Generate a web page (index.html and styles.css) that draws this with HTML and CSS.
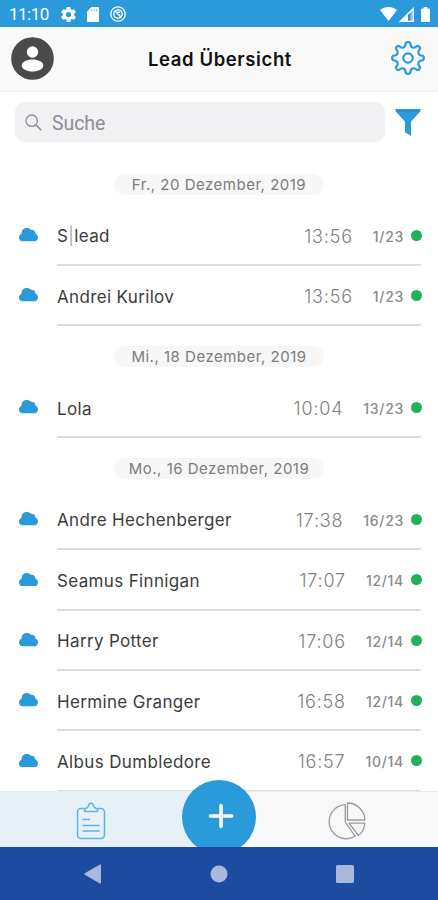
FILE: index.html
```html
<!DOCTYPE html>
<html lang="de">

<head>
    <meta charset="UTF-8">
    <meta name="viewport" content="width=device-width, initial-scale=1.0">
    <title>Lead Übersicht</title>
    <link rel="stylesheet" href="styles.css">
</head>

<body>
    <!-- shared icons -->
    <svg class="sprite" width="0" height="0">
        <symbol id="cloud" viewBox="0 0 20 14" preserveAspectRatio="none">
            <path d="M4.200 14A4.100 4.100 0 0 1 0 9.900C0 8 1.100 6.600 2.700 6 2.600 2.500 4.700 0 8 0c2 0 3.500.7 4.600 1.800 2.700-.4 4.600 1.200 4.600 3.800 1.700.7 2.800 2.300 2.800 4.300 0 2.400-1.800 4.100-4.200 4.100z" />
        </symbol>
    </svg>

    <div class="phone">
        <div class="status-bar">
            <span class="clock">11:10</span>
            <svg class="status-gear" width="15" height="15" viewBox="2 2 20 20" fill="#fff">
                <path fill-rule="evenodd" d="M19.430 12.980c.04-.32.07-.64.07-.98s-.03-.66-.07-.98l2.110-1.650c.19-.15.24-.42.12-.64l-2-3.460c-.12-.22-.39-.3-.61-.22l-2.490 1c-.52-.4-1.080-.73-1.690-.98l-.38-2.650A.49.49 0 0 0 14 2h-4c-.25 0-.46.18-.49.42l-.38 2.650c-.61.25-1.170.59-1.690.98l-2.490-1c-.23-.09-.49 0-.61.22l-2 3.460c-.13.22-.07.49.12.64l2.110 1.650c-.04.32-.07.65-.07.98s.03.66.07.98l-2.110 1.650c-.19.15-.24.42-.12.64l2 3.460c.12.22.39.3.61.22l2.490-1c.52.4 1.080.73 1.690.98l.38 2.650c.03.24.24.42.49.42h4c.25 0 .46-.18.49-.42l.38-2.650c.61-.25 1.170-.59 1.690-.98l2.490 1c.23.09.49 0 .61-.22l2-3.460c.12-.22.07-.49-.12-.64zM12 15.500a3.500 3.500 0 1 1 0-7 3.500 3.500 0 0 1 0 7z" />
            </svg>
            <svg class="status-card" width="12" height="15" viewBox="0 0 12 15">
                <path fill="#fff" d="M4.500 0H11a1 1 0 0 1 1 1v13a1 1 0 0 1-1 1H1a1 1 0 0 1-1-1V4.500z" />
                <path stroke="#7cc0e9" stroke-width="1" d="M4.700 2.200v2.200M7.100 2.200v2.200M9.500 2.200v2.200" />
            </svg>
            <svg class="status-sync" width="16" height="16" viewBox="0 0 16 16" fill="none" stroke="#fff">
                <circle cx="8" cy="8" r="7.200" stroke-width="1.300" />
                <circle cx="8" cy="8" r="4.200" stroke-width="1.300" />
                <path stroke-width="1.400" d="M4.800 4.800l6.400 6.400M7.500 6.200h2.500" />
            </svg>
            <div class="status-right">
                <svg width="17" height="14" viewBox="0 0 17 14">
                    <path fill="#fff" d="M0 3C5-1 12-1 17 3L8.500 14z" />
                </svg>
                <svg width="15" height="15" viewBox="0 0 15 15">
                    <path fill="#8fcaed" d="M15 0v15H0z" />
                    <path fill="#fff" d="M9 6v9H0z" />
                    <path fill="none" stroke="#fff" stroke-width="1.200" d="M14.400 1.500v12.900H1.500z" />
                    <path fill="#2b9adb" d="M9 8l2.500-2.500v8H9z" />
                </svg>
                <svg class="battery" width="9" height="15" viewBox="0 0 9 15">
                    <path fill="#fff" d="M2.700 0h3.600v1.500H8a1 1 0 0 1 1 1V14a1 1 0 0 1-1 1H1a1 1 0 0 1-1-1V2.500a1 1 0 0 1 1-1h1.700z" />
                </svg>
            </div>
        </div>

        <header class="header">
            <svg width="43" height="43" viewBox="0 0 43 43">
                <circle cx="21.500" cy="21.500" r="21.300" fill="#4a4a4a" />
                <circle cx="21.500" cy="15" r="5.700" fill="#fff" />
                <path fill="#fff" d="M10.700 28.500c0-3.500 5-6 10.800-6s10.800 2.500 10.800 6-5 6-10.800 6-10.800-2.500-10.800-6z" />
            </svg>
            <h1>Lead Übersicht</h1>
            <svg width="34" height="34" viewBox="0 0 34 34" fill="none" stroke="#2b9adb" stroke-width="2.200">
                <circle cx="17" cy="17" r="4.700" />
                <path stroke-linejoin="round" d="M14.500 3.200Q14.500 1.200 17 1.200T19.500 3.200Q19.700 6 21.800 6.600 23.600 7.200 25.300 5.500 26.700 4.300 28.200 5.800T28.500 8.700Q26.800 10.500 27.400 12.200 28.100 14.500 30.800 14.500 32.800 14.700 32.800 17T30.800 19.500Q28.100 19.500 27.400 21.800 26.800 23.500 28.500 25.300 29.700 26.700 28.200 28.200T25.300 28.500Q23.600 26.800 21.800 27.400 19.700 28 19.500 30.800 19.500 32.800 17 32.800T14.500 30.800Q14.300 28 12.200 27.400 10.400 26.800 8.700 28.500 7.300 29.700 5.800 28.200T5.500 25.300Q7.200 23.500 6.600 21.800 5.900 19.500 3.200 19.500 1.200 19.300 1.200 17T3.200 14.500Q5.900 14.500 6.600 12.200 7.200 10.500 5.500 8.700 4.300 7.300 5.800 5.800T8.700 5.500Q10.400 7.200 12.200 6.600 14.300 6 14.500 3.200z" />
            </svg>
        </header>

        <div class="search-row">
            <div class="search">
                <svg width="17" height="17" viewBox="0 0 17 17" fill="none" stroke="#8e8e93" stroke-width="1.300">
                    <circle cx="6.700" cy="6.700" r="5.700" />
                    <path stroke-width="1.600" d="M10.900 10.900l5.300 5.300" />
                </svg>
                <span>Suche</span>
            </div>
            <svg class="filter" width="26" height="28" viewBox="0 0 26 28">
                <path fill="#2b9adb" d="M.5 0h25v2.200L16 12.500V27l-6-3.800V12.500L.5 2.200z" />
                <path stroke="#1d84c4" d="M1 2h24" />
            </svg>
        </div>

        <main class="list">
            <div class="date"><span>Fr., 20 Dezember, 2019</span></div>
            <div class="lead">
                <svg class="cloud"><use href="#cloud" /></svg>
                <div class="lead-body">
                    <span class="name">S<span class="bar">|</span>lead</span>
                    <span class="time">13:56</span>
                    <span class="count">1/23</span>
                    <i class="dot"></i>
                </div>
            </div>
            <div class="lead">
                <svg class="cloud"><use href="#cloud" /></svg>
                <div class="lead-body">
                    <span class="name">Andrei Kurilov</span>
                    <span class="time">13:56</span>
                    <span class="count">1/23</span>
                    <i class="dot"></i>
                </div>
            </div>

            <div class="date"><span>Mi., 18 Dezember, 2019</span></div>
            <div class="lead">
                <svg class="cloud"><use href="#cloud" /></svg>
                <div class="lead-body">
                    <span class="name">Lola</span>
                    <span class="time">10:04</span>
                    <span class="count">13/23</span>
                    <i class="dot"></i>
                </div>
            </div>

            <div class="date"><span>Mo., 16 Dezember, 2019</span></div>
            <div class="lead">
                <svg class="cloud"><use href="#cloud" /></svg>
                <div class="lead-body">
                    <span class="name">Andre Hechenberger</span>
                    <span class="time">17:38</span>
                    <span class="count">16/23</span>
                    <i class="dot"></i>
                </div>
            </div>
            <div class="lead">
                <svg class="cloud"><use href="#cloud" /></svg>
                <div class="lead-body">
                    <span class="name">Seamus Finnigan</span>
                    <span class="time">17:07</span>
                    <span class="count">12/14</span>
                    <i class="dot"></i>
                </div>
            </div>
            <div class="lead">
                <svg class="cloud"><use href="#cloud" /></svg>
                <div class="lead-body">
                    <span class="name">Harry Potter</span>
                    <span class="time">17:06</span>
                    <span class="count">12/14</span>
                    <i class="dot"></i>
                </div>
            </div>
            <div class="lead">
                <svg class="cloud"><use href="#cloud" /></svg>
                <div class="lead-body">
                    <span class="name">Hermine Granger</span>
                    <span class="time">16:58</span>
                    <span class="count">12/14</span>
                    <i class="dot"></i>
                </div>
            </div>
            <div class="lead">
                <svg class="cloud"><use href="#cloud" /></svg>
                <div class="lead-body">
                    <span class="name">Albus Dumbledore</span>
                    <span class="time">16:57</span>
                    <span class="count">10/14</span>
                    <i class="dot"></i>
                </div>
            </div>
        </main>

        <nav class="tabs">
            <div class="tab active">
                <svg width="30" height="38" viewBox="0 0 30 38" fill="none" stroke="#64b2e0" stroke-width="1.500">
                    <path d="M8.500 6.500H5a3.500 3.500 0 0 0-3.500 3.500v23A3.500 3.500 0 0 0 5 36.500h20a3.500 3.500 0 0 0 3.500-3.500V10A3.500 3.500 0 0 0 25 6.500h-3.500" />
                    <path stroke-linejoin="round" d="M8.500 9.500V8q0-1.300 1.500-1.700 2-.6 2.400-2.500.6-2.600 2.600-2.600t2.600 2.600q.4 1.900 2.400 2.500 1.500.4 1.500 1.700v1.500z" />
                    <path d="M6.500 17.500H14M6.500 23.500h17M6.500 29h17" />
                </svg>
            </div>
            <div class="tab">
                <svg width="38" height="38" viewBox="0 0 38 38" fill="none" stroke="#9a9a9a" stroke-width="1.300" stroke-linejoin="round">
                    <path d="M17.300 2.700A17 17 0 1 0 27 34.200L17.300 20z" />
                    <path d="M19.500 1a17.300 17.300 0 0 1 17.300 17H19.500z" />
                    <path d="M21 21.200h15.800a17 17 0 0 1-6.300 12.300z" />
                </svg>
            </div>
            <div class="fab-clip">
                <div class="fab">
                    <svg width="26" height="26" viewBox="0 0 26 26">
                        <path stroke="#fff" stroke-width="3.600" stroke-linecap="round" d="M13 2.500v21M2.500 13h21" />
                    </svg>
                </div>
            </div>
        </nav>

        <div class="android-nav">
            <svg width="17" height="20" viewBox="0 0 17 20"><path fill="#a9b8dc" d="M15.500.8q1.500-.8 1.500.8v16.800q0 1.600-1.500.8L.8 10.700q-1-.7 0-1.400z" /></svg>
            <svg width="18" height="18" viewBox="0 0 18 18"><circle cx="9" cy="9" r="8.500" fill="#a9b8dc" /></svg>
            <svg width="18" height="18" viewBox="0 0 18 18"><rect width="18" height="18" rx="1.500" fill="#a9b8dc" /></svg>
        </div>
    </div>
</body>

</html>
```
FILE: styles.css
```css
* {
    box-sizing: border-box;
}

body {
    margin: 0;
    font-family: Inter, "Liberation Sans", sans-serif;
    background-color: #fff;
}

svg {
    display: block;
    flex: none;
}

.sprite {
    position: absolute;
}

.phone {
    display: flex;
    flex-direction: column;
    width: 438px;
    height: 900px;
    overflow: hidden;
}

.status-bar {
    display: flex;
    align-items: center;
    height: 27px;
    padding: 1px 8px 0 9px;
    background-color: #2b9adb;
    color: #fff;
}

.clock {
    width: 52px;
    font: 17px/20px Roboto, sans-serif;
    letter-spacing: -.5px;
}

.status-card {
    margin-left: 11px;
}

.status-sync {
    margin-left: 11px;
}

.status-right {
    display: flex;
    align-items: center;
    gap: 2px;
    margin-left: auto;
}

.battery {
    margin-left: 5px;
}

.header {
    display: flex;
    align-items: center;
    height: 65px;
    padding: 0 13px 1px 11px;
    background-color: #f9f9f9;
    border-bottom: 2px solid #f4f4f4;
}

h1 {
    flex: 1;
    margin: 0;
    padding: 1px 5px 0 0;
    text-align: center;
    font-size: 18.500px;
    font-weight: 600;
    letter-spacing: .6px;
    color: #111;
}

.search-row {
    display: flex;
    height: 61px;
    padding: 10px 17px 0 15px;
}

.search {
    display: flex;
    align-items: center;
    gap: 10px;
    width: 370px;
    height: 40px;
    padding-left: 10px;
    border-radius: 10px;
    background-color: #f1f1f3;
    color: #8e8e93;
    font: 19.500px/40px Roboto, sans-serif;
}

.search span {
    padding-top: 3px;
    letter-spacing: -.1px;
}

.filter {
    margin: 7px 0 0 10px;
}

.list {
    height: 638px;
    overflow: hidden;
}

.date {
    display: flex;
    justify-content: center;
    height: 52.600px;
    padding-top: 20.500px;
}

.lead + .date {
    margin-top: -1px;
}

.date span {
    width: 210px;
    height: 21px;
    border-radius: 11px;
    background-color: #f7f7f7;
    color: #7c7c7c;
    font-size: 15px;
    line-height: 22px;
    letter-spacing: .5px;
    text-align: center;
}

.lead {
    display: flex;
    height: 60.350px;
    padding: 0 17px 0 19px;
}

.cloud {
    width: 19px;
    height: 13.500px;
    margin: 22.500px 19px 0 0;
    fill: #2b9adb;
}

.lead-body {
    display: flex;
    align-items: center;
    flex: 1;
    padding-top: 3px;
    border-bottom: 2px solid #dcdcdc;
}

.name {
    flex: 1;
    font-size: 17px;
    letter-spacing: .35px;
    color: #3c3c3c;
}

.bar {
    color: #aaa;
}

.time {
    margin-right: 20px;
    font-size: 18px;
    font-weight: 300;
    letter-spacing: .8px;
    color: #808080;
}

.count {
    margin-right: 7px;
    font-size: 14px;
    font-weight: 500;
    letter-spacing: .7px;
    color: #8a8a8a;
}

.dot {
    width: 11px;
    height: 11px;
    margin: -2px -1px 0 0;
    border-radius: 50%;
    background-color: #22b05b;
}

.tabs {
    position: relative;
    display: flex;
    height: 56px;
    border-top: 1px solid #e8ecee;
    background-color: #f8f8f8;
}

.tab {
    display: flex;
    flex: 1;
    align-items: center;
    justify-content: center;
    padding: 2px 0 0 38px;
}

.tab.active {
    padding: 2px 35px 0 0;
    background-color: #e6f0f7;
}

/* the round button sticks out above the tab bar and is cut at its bottom */
.fab-clip {
    position: absolute;
    left: 182px;
    bottom: 0;
    width: 74px;
    height: 67px;
    overflow: hidden;
}

.fab {
    display: flex;
    align-items: center;
    justify-content: center;
    width: 74px;
    height: 74px;
    padding: 0 0 2px 3px;
    border-radius: 50%;
    background-color: #2b9adb;
}

.android-nav {
    display: flex;
    align-items: center;
    justify-content: space-between;
    flex: 1;
    padding: 0 84px;
    background-color: #1c4ba0;
}
```
